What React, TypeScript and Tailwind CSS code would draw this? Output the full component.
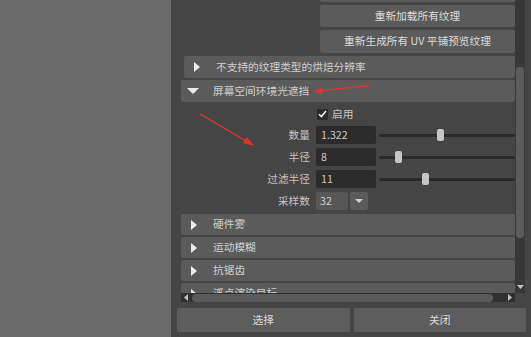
import React from 'react';

function RightTri() {
  return (
    <svg width="6" height="10" viewBox="0 0 6 10" className="shrink-0">
      <polygon points="0,0 6,5 0,10" fill="#ececec" />
    </svg>
  );
}

function DownTri() {
  return (
    <svg width="12" height="6" viewBox="0 0 12 6" className="shrink-0">
      <polygon points="0,0 12,0 6,6" fill="#ececec" />
    </svg>
  );
}

function SectionRow({ title, open = false, className = '' }: { title: string; open?: boolean; className?: string }) {
  return (
    <div className={`flex shrink-0 items-center rounded-[2px] bg-[#5b5b5b] ${className}`}>
      <div className={`flex w-[32px] shrink-0 items-center ${open ? 'pl-[6px]' : 'pl-[10px]'}`}>
        {open ? <DownTri /> : <RightTri />}
      </div>
      <span className="whitespace-nowrap text-[#cfcfcf]">{title}</span>
    </div>
  );
}

function FieldRow({ label, value, thumb }: { label: string; value: string; thumb: string }) {
  return (
    <div className="flex h-[18px] items-center">
      <span className="w-[129px] shrink-0 text-right text-[#c4c4c4]">{label}</span>
      <div className="ml-[6px] flex h-[18px] w-[60px] shrink-0 items-center rounded-[2px] bg-[#2b2b2b] pl-[5px] text-[#cacaca]">
        {value}
      </div>
      <div className="relative ml-[3px] flex h-[18px] flex-1 items-center">
        <div className="h-[3px] w-full rounded-full bg-[#2a2a2a]" />
        <div className={`absolute top-[3px] h-[12px] w-[7px] rounded-[2px] bg-[#c6c6c6] ${thumb}`} />
      </div>
    </div>
  );
}

export default function App() {
  return (
    <div className="relative flex h-[337px] w-[531px] overflow-hidden bg-[#454545] font-['Noto_Sans_CJK_SC','Noto_Sans',sans-serif] text-[10.7px] leading-none">
      <div className="w-[171px] shrink-0 bg-[#6b6b6b]" />

      <div className="flex flex-1 flex-col">
        <div className="flex h-[302px]">
          <div className="flex flex-1 flex-col pl-[10px]">
            {/* scrolled content */}
            <div className="flex h-[293px] flex-col overflow-hidden">
              <div className="ml-[139px] h-[2px] shrink-0 bg-[#5b5b5b]" />
              <div className="ml-[139px] mt-[3px] flex h-[22px] shrink-0 items-center justify-center rounded-[2px] bg-[#5b5b5b] text-[#dcdcdc]">
                重新加载所有纹理
              </div>
              <div className="ml-[139px] mt-[3px] flex h-[23px] shrink-0 items-center justify-center whitespace-nowrap rounded-[2px] bg-[#5b5b5b] text-[#dcdcdc]">
                重新生成所有 UV 平铺预览纹理
              </div>
              <SectionRow title="不支持的纹理类型的烘焙分辨率" className="ml-[3px] mt-[3px] h-[22px]" />
              <SectionRow title="屏幕空间环境光遮挡" open className="mt-[2px] h-[22px]" />

              <div className="flex shrink-0 flex-col pb-[4px] pt-[6px]">
                <div className="flex h-[12px] items-center pl-[136px]">
                  <div className="flex h-[11px] w-[11px] items-center justify-center rounded-[1px] bg-[#2b2b2b]">
                    <svg width="9" height="8" viewBox="0 0 9 8">
                      <path d="M1 4.2 L3.4 6.6 L8 1" stroke="#f0f0f0" strokeWidth="1.5" fill="none" />
                    </svg>
                  </div>
                  <span className="ml-[4px] text-[#c8c8c8]">启用</span>
                </div>
                <div className="mt-[6px] flex flex-col gap-[4px]">
                  <FieldRow label="数量" value="1.322" thumb="left-[58px]" />
                  <FieldRow label="半径" value="8" thumb="left-[16px]" />
                  <FieldRow label="过滤半径" value="11" thumb="left-[43px]" />
                  <div className="flex h-[18px] items-center">
                    <span className="w-[129px] shrink-0 text-right text-[#c4c4c4]">采样数</span>
                    <div className="ml-[6px] flex h-[18px] w-[32px] items-center rounded-[2px] bg-[#575757] pl-[4px] text-[#d0d0d0]">
                      32
                    </div>
                    <div className="ml-[2px] flex h-[18px] w-[18px] items-center justify-center rounded-[2px] bg-[#5b5b5b]">
                      <svg width="8" height="4" viewBox="0 0 8 4">
                        <polygon points="0,0 8,0 4,4" fill="#cfcfcf" />
                      </svg>
                    </div>
                  </div>
                </div>
              </div>

              <div className="flex flex-col gap-[2px]">
                <SectionRow title="硬件雾" className="h-[21px]" />
                <SectionRow title="运动模糊" className="h-[21px]" />
                <SectionRow title="抗锯齿" className="h-[21px]" />
                <SectionRow title="浮点渲染目标" className="h-[21px]" />
              </div>
            </div>

            {/* horizontal scrollbar */}
            <div className="flex h-[9px] items-center bg-[#2f2f2f]">
              <div className="flex w-[10px] justify-center">
                <svg width="4" height="7" viewBox="0 0 4 7">
                  <polygon points="4,0 0,3.5 4,7" fill="#bdbdbd" />
                </svg>
              </div>
              <div className="ml-[1px] h-[8px] w-[301px] rounded-full bg-[#5a5a5a]" />
              <div className="flex-1" />
              <div className="flex w-[11px] justify-center">
                <svg width="4" height="7" viewBox="0 0 4 7">
                  <polygon points="0,0 4,3.5 0,7" fill="#bdbdbd" />
                </svg>
              </div>
            </div>
          </div>

          {/* vertical scrollbar */}
          <div className="flex h-[293px] w-[10px] flex-col items-center bg-[#383838] pb-[4px] pt-[67px]">
            <div className="h-[171px] w-[8px] rounded-full bg-[#5c5c5c]" />
            <div className="flex-1" />
            <svg width="7" height="4" viewBox="0 0 7 4">
              <polygon points="0,0 7,0 3.5,4" fill="#c4c4c4" />
            </svg>
          </div>
          <div className="w-[6px]" />
        </div>

        <div className="flex gap-[4px] pl-[6px] pr-[5px] pt-[6px]">
          <button className="flex h-[24px] flex-1 items-center justify-center rounded-[2px] bg-[#5d5d5d] text-[#dcdcdc]">
            选择
          </button>
          <button className="flex h-[24px] flex-1 items-center justify-center rounded-[2px] bg-[#5d5d5d] text-[#dcdcdc]">
            关闭
          </button>
        </div>
      </div>

      {/* red annotation arrows */}
      <svg className="pointer-events-none absolute left-0 top-0" width="531" height="337" viewBox="0 0 531 337">
        <line x1="369" y1="85.5" x2="320" y2="90.6" stroke="#e3342b" strokeWidth="1.4" />
        <polygon points="313.5,91.3 322.4,94.6 321.7,87.6" fill="#e3342b" />
        <line x1="200" y1="114" x2="247" y2="141.5" stroke="#e3342b" strokeWidth="1.4" />
        <polygon points="254,145.5 243,143.2 246.6,137.1" fill="#e3342b" />
      </svg>
    </div>
  );
}
